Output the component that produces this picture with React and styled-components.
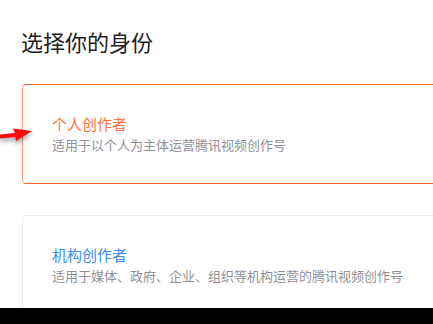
import React from 'react';
import styled, { createGlobalStyle } from 'styled-components';

const Global = createGlobalStyle`
  html, body {
    margin: 0;
    padding: 0;
    background: #fff;
    overflow: hidden;
  }
  body {
    font-family: "Noto Sans CJK SC", "Noto Sans", sans-serif;
  }
`;

const Page = styled.div`
  width: 433px;
  height: 324px;
  position: relative;
  overflow: hidden;
  padding: 26px 0 0 22px;
  box-sizing: border-box;
`;

const Heading = styled.h2`
  margin: 0 0 28px -1px;
  font-size: 22px;
  line-height: 30px;
  font-weight: 400;
  color: #1f1f24;
`;

const List = styled.div`
  display: flex;
  flex-direction: column;
  gap: 31px;
`;

const Card = styled.div`
  width: 560px;
  box-sizing: border-box;
  padding: 28px 0 28px 29px;
  border: 1px solid ${p => (p.active ? '#ff5f22' : '#ececec')};
  border-left-color: ${p => (p.active ? '#ffa584' : '#ececec')};
  border-radius: 4px;
`;

const CardTitle = styled.div`
  font-size: 15px;
  line-height: 22px;
  color: ${p => (p.active ? '#ff7440' : '#3d8ef2')};
`;

const CardDesc = styled.div`
  font-size: 13px;
  line-height: 20px;
  color: #8f9099;
`;

const Pointer = styled.svg`
  position: absolute;
  left: 0;
  top: 126px;
  filter: drop-shadow(0 3px 2.5px rgba(0, 0, 0, 0.4));
`;

const BlackBar = styled.div`
  position: absolute;
  left: 0;
  right: 0;
  bottom: 0;
  height: 16px;
  background: #000;
`;

const roles = [
  { title: '个人创作者', desc: '适用于以个人为主体运营腾讯视频创作号', active: true },
  { title: '机构创作者', desc: '适用于媒体、政府、企业、组织等机构运营的腾讯视频创作号' },
];

export default function App() {
  return (
    <Page>
      <Global />
      <Heading>选择你的身份</Heading>
      <List>
        {roles.map(r => (
          <Card key={r.title} active={r.active}>
            <CardTitle active={r.active}>{r.title}</CardTitle>
            <CardDesc>{r.desc}</CardDesc>
          </Card>
        ))}
      </List>
      <Pointer width="36" height="18" viewBox="0 0 36 18">
        <path d="M0 8.5 L15 7 L13 2.5 L32 5 L16 15 L15.5 11 L0 12.5 Z" fill="#ff0a0a" />
      </Pointer>
      <BlackBar />
    </Page>
  );
}
